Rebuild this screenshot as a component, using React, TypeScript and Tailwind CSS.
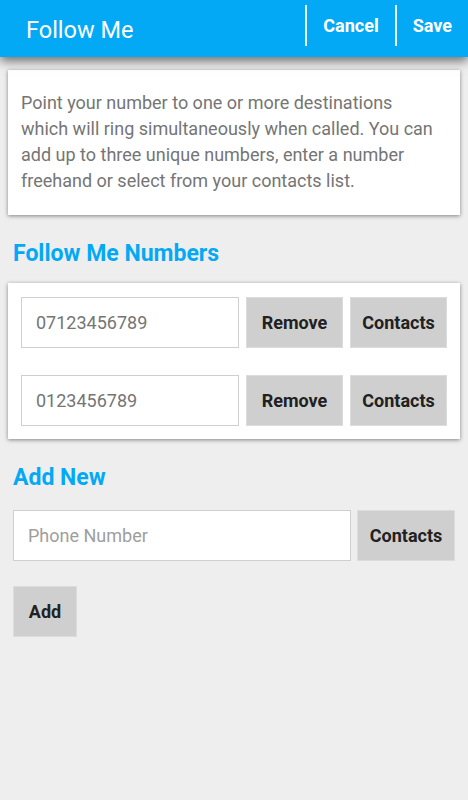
import React from "react";

const font = { fontFamily: "Roboto, 'Noto Sans', sans-serif" };

function Btn({ label, className = "" }: { label: string; className?: string }) {
  return (
    <button
      className={`h-[51px] shrink-0 bg-[#cfcfcf] border border-[#dcdcdc] text-[18px] font-bold text-[#212121] ${className}`}
    >
      {label}
    </button>
  );
}

function Row({ value }: { value: string }) {
  return (
    <div className="flex items-center">
      <div className="h-[51px] w-[218px] shrink-0 border border-[#cfcfcf] bg-white flex items-center pl-[14px] text-[18px] text-[#757575]">
        {value}
      </div>
      <Btn label="Remove" className="ml-[7px] w-[97px]" />
      <Btn label="Contacts" className="ml-[7px] w-[97px]" />
    </div>
  );
}

export default function App() {
  return (
    <div style={font} className="min-h-[800px] w-[468px] bg-[#eeeeee] overflow-hidden">
      <header className="relative z-10 h-[57px] bg-[#03a9f4] flex items-start shadow-[0_4px_10px_rgba(0,0,0,0.55)]">
        <div className="flex-1 h-full flex items-center pl-[26px] pt-[4px] text-[23.5px] text-white">
          Follow Me
        </div>
        <button className="mt-[5px] h-[41px] border-l-2 border-white/90 pl-[16px] pr-[16px] text-[18px] font-bold text-white">
          Cancel
        </button>
        <button className="mt-[5px] h-[41px] border-l-2 border-white/90 pl-[16px] pr-[16px] text-[18px] font-bold text-white">
          Save
        </button>
      </header>

      <div className="mx-[8px] mt-[13px] bg-white shadow-[0_1px_4px_rgba(0,0,0,0.45)] pl-[13px] pr-[20px] pt-[20px] pb-[21px]">
        <p className="text-[18px] leading-[26px] text-[#757575]">
          Point your number to one or more destinations which will ring simultaneously when called. You can add up to three unique numbers, enter a number freehand or select from your contacts list.
        </p>
      </div>

      <h2 className="mx-[13px] mt-[25px] text-[23px] leading-[28px] font-bold text-[#03a9f4]">
        Follow Me Numbers
      </h2>

      <div className="mx-[8px] mt-[15px] bg-white shadow-[0_1px_4px_rgba(0,0,0,0.45)] px-[13px] pt-[14px] pb-[13px] flex flex-col gap-[27px]">
        <Row value="07123456789" />
        <Row value="0123456789" />
      </div>

      <h2 className="mx-[13px] mt-[25px] text-[23px] leading-[28px] font-bold text-[#03a9f4]">
        Add New
      </h2>

      <div className="mx-[13px] mt-[18px] flex items-center">
        <div className="h-[51px] w-[338px] shrink-0 border border-[#cfcfcf] bg-white flex items-center pl-[14px] text-[18px] text-[#9e9e9e]">
          Phone Number
        </div>
        <Btn label="Contacts" className="ml-[6px] w-[98px]" />
      </div>

      <div className="mx-[13px] mt-[25px]">
        <Btn label="Add" className="w-[64px]" />
      </div>
    </div>
  );
}
